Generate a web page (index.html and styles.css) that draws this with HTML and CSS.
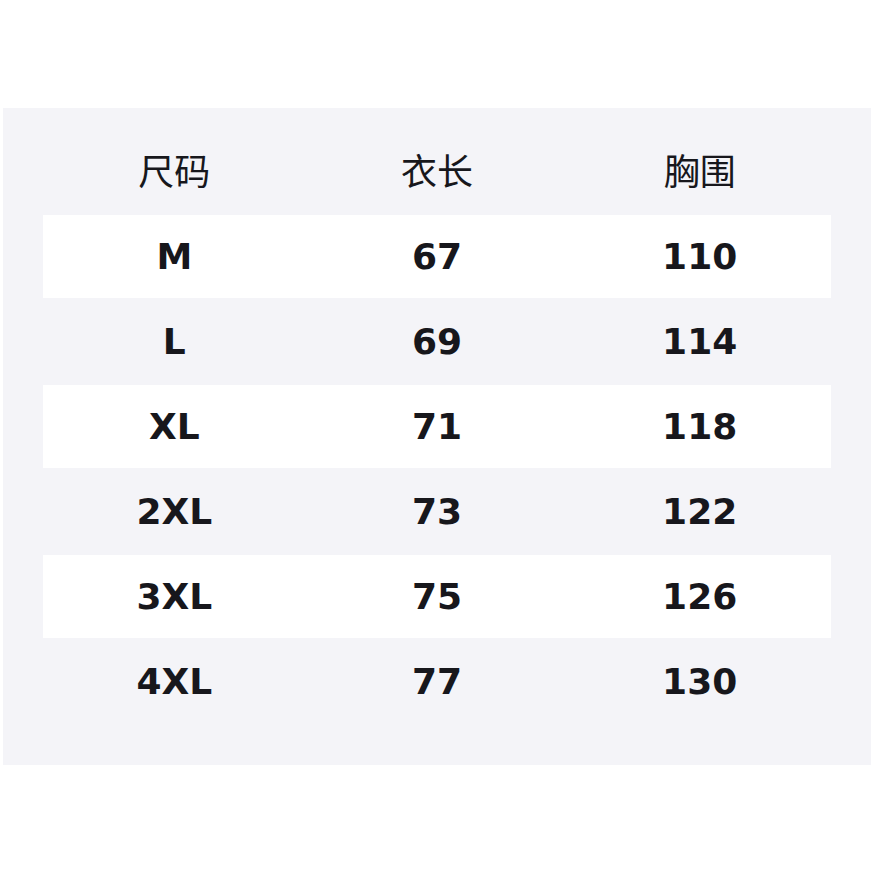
FILE: index.html
```html
<!DOCTYPE html>
<html lang="zh">
<head>
<meta charset="utf-8">
<title>尺码表</title>
<link rel="stylesheet" href="styles.css">
</head>
<body>
<div class="panel">
  <div class="row head">
    <div class="cell">尺码</div>
    <div class="cell">衣长</div>
    <div class="cell">胸围</div>
  </div>
  <div class="row odd"><div class="cell">M</div><div class="cell">67</div><div class="cell">110</div></div>
  <div class="row even"><div class="cell">L</div><div class="cell">69</div><div class="cell">114</div></div>
  <div class="row odd"><div class="cell">XL</div><div class="cell">71</div><div class="cell">118</div></div>
  <div class="row even"><div class="cell">2XL</div><div class="cell">73</div><div class="cell">122</div></div>
  <div class="row odd"><div class="cell">3XL</div><div class="cell">75</div><div class="cell">126</div></div>
  <div class="row even"><div class="cell">4XL</div><div class="cell">77</div><div class="cell">130</div></div>
</div>
</body>
</html>
```
FILE: styles.css
```css
html, body {
  margin: 0;
  padding: 0;
  background: #ffffff;
}
body {
  padding: 108px 3px 0 3px;
  font-family: "DejaVu Sans", "Noto Sans CJK SC", sans-serif;
  color: #17171c;
}
.panel {
  background: #f4f4f8;
  padding: 40px;
}
.row {
  display: grid;
  grid-template-columns: 1fr 1fr 1fr;
  align-items: center;
}
.cell {
  text-align: center;
}
.head {
  height: 67px;
  align-items: start;
  font-family: "Noto Sans CJK SC", sans-serif;
  font-size: 36px;
  font-weight: 400;
  line-height: 42px;
}
.odd, .even {
  font-size: 36px;
  font-weight: 700;
  line-height: 40px;
}
.odd {
  height: 83px;
  background: #ffffff;
}
.even {
  height: 87px;
}
```
